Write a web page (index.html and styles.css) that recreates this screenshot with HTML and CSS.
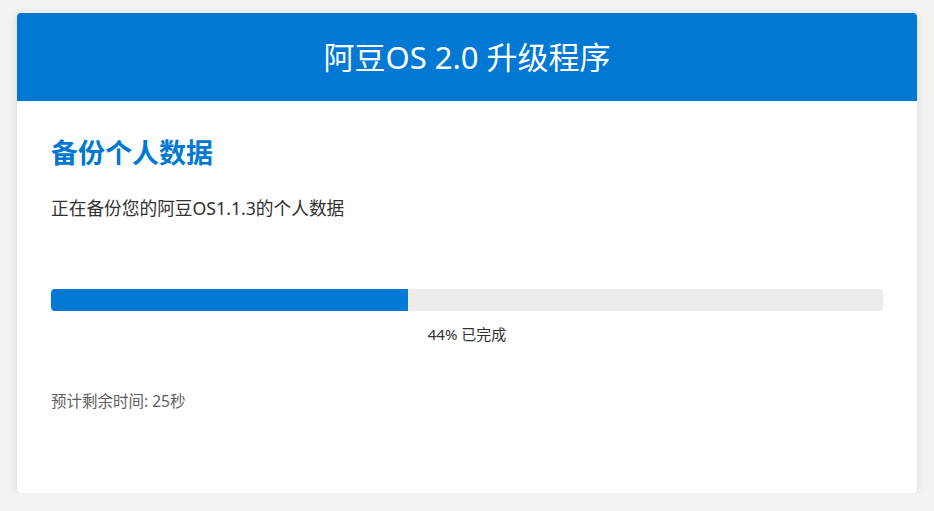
FILE: index.html
```html
<!DOCTYPE html>
<html lang="zh-CN">
<head>
<meta charset="utf-8">
<title>阿豆OS 2.0 升级程序</title>
<link rel="stylesheet" href="styles.css">
</head>
<body>
<div class="card">
  <header class="card-header">
    <h1 class="title">阿豆OS 2.0 升级程序</h1>
  </header>
  <main class="card-body">
    <h2 class="step-title">备份个人数据</h2>
    <p class="step-desc">正在备份您的阿豆OS1.1.3的个人数据</p>
    <div class="progress">
      <div class="progress-fill" style="width: 42.9%"></div>
    </div>
    <p class="progress-label">44% 已完成</p>
    <p class="eta">预计剩余时间: 25秒</p>
  </main>
</div>
</body>
</html>
```

FILE: styles.css
```css
html, body {
  margin: 0;
  padding: 0;
}
body {
  background: #f3f2f1;
  font-family: "Noto Sans", "Noto Sans CJK SC", sans-serif;
  color: #323130;
  padding-top: 13px;
}
.card {
  width: 900px;
  height: 480px;
  margin: 0 auto;
  background: #ffffff;
  border-radius: 4px;
  overflow: hidden;
  box-shadow: 0 2px 8px rgba(0, 0, 0, 0.10);
}
.card-header {
  background: #0078d4;
  height: 88px;
  display: flex;
  align-items: center;
  justify-content: center;
}
.title {
  margin: 0;
  color: #ffffff;
  font-size: 31px;
  font-weight: 400;
  line-height: 40px;
}
.card-body {
  padding: 34px 34px 0;
}
.step-title {
  margin: 0;
  color: #0078d4;
  font-size: 27px;
  font-weight: 700;
  line-height: 36px;
}
.step-desc {
  margin: 25px 0 0;
  font-size: 17.7px;
  line-height: 24px;
}
.progress {
  margin-top: 69px;
  height: 22px;
  background: #edebe9;
  border-radius: 4px;
  overflow: hidden;
}
.progress-fill {
  height: 100%;
  background: #0078d4;
}
.progress-label {
  margin: 13px 0 0;
  text-align: center;
  font-size: 15px;
  line-height: 20px;
}
.eta {
  margin: 47px 0 0;
  font-size: 15.5px;
  line-height: 20px;
  color: #605e5c;
}
```
